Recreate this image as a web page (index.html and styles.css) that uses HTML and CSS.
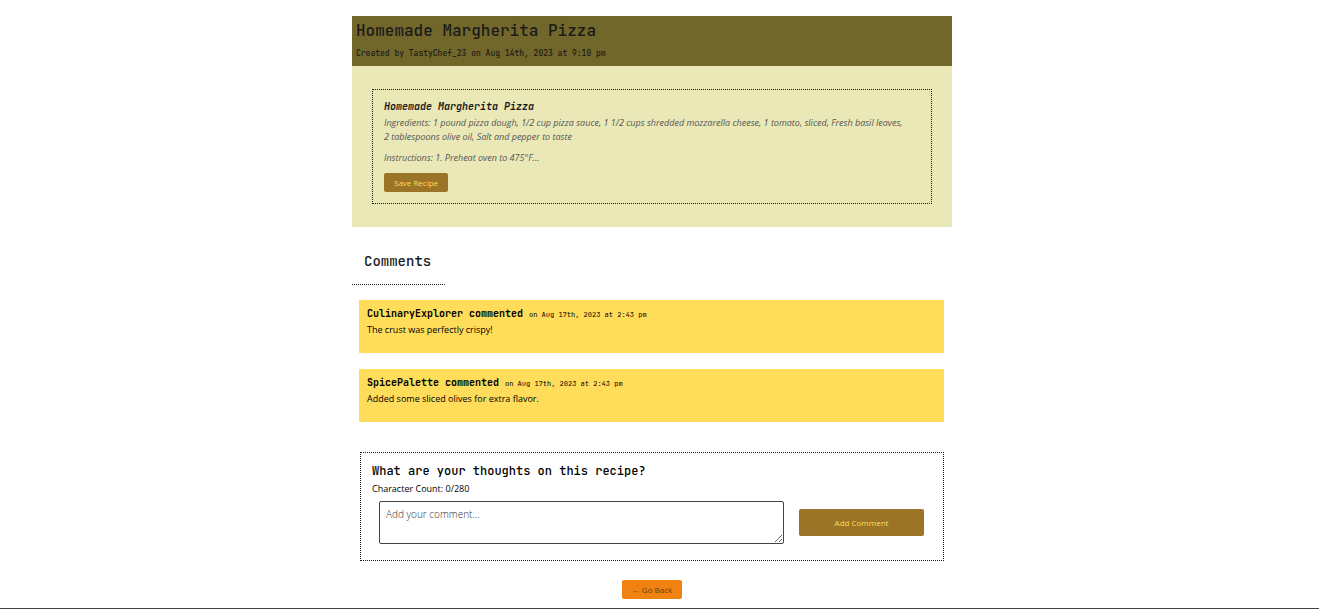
FILE: index.html
```html
<!DOCTYPE html>
<html lang="en">
<head>
<meta charset="utf-8">
<title>Homemade Margherita Pizza</title>
<link rel="stylesheet" href="styles.css">
</head>
<body>
<main class="page">
  <article class="recipe">
    <header class="recipe-header">
      <h1 class="recipe-title">Homemade Margherita Pizza</h1>
      <p class="recipe-meta">Created by TastyChef_23 on Aug 14th, 2023 at 9:10 pm</p>
    </header>
    <div class="recipe-body">
      <section class="recipe-card">
        <h2 class="recipe-name">Homemade Margherita Pizza</h2>
        <p class="recipe-text">Ingredients: 1 pound pizza dough, 1/2 cup pizza sauce, 1 1/2 cups shredded mozzarella cheese, 1 tomato, sliced, Fresh basil leaves, 2&nbsp;tablespoons olive oil, Salt and pepper to taste</p>
        <p class="recipe-text">Instructions: 1. Preheat oven to 475°F...</p>
        <button class="btn" type="button">Save Recipe</button>
      </section>
    </div>
  </article>
  <h2 class="comments-title">Comments</h2>
  <section class="comments">
    <article class="comment">
      <h3 class="comment-head">CulinaryExplorer commented <span class="comment-date">on Aug 17th, 2023 at 2:43 pm</span></h3>
      <p class="comment-text">The crust was perfectly crispy!</p>
    </article>
    <article class="comment">
      <h3 class="comment-head">SpicePalette commented <span class="comment-date">on Aug 17th, 2023 at 2:43 pm</span></h3>
      <p class="comment-text">Added some sliced olives for extra flavor.</p>
    </article>
  </section>
  <form class="comment-form">
    <label class="form-title" for="comment">What are your thoughts on this recipe?</label>
    <p class="char-count">Character Count: 0/280</p>
    <div class="form-row">
      <textarea class="comment-input" id="comment" maxlength="280" placeholder="Add your comment..."></textarea>
      <button class="btn btn-submit" type="button">Add Comment</button>
    </div>
  </form>
  <button class="btn btn-back" type="button">← Go Back</button>
</main>
<footer class="footer"></footer>
</body>
</html>
```
FILE: styles.css
```css
* { box-sizing: border-box; }

body {
  margin: 0;
  background: #fff;
  color: #1a1a1a;
  font: 400 9px/14px "Open Sans", sans-serif;
}

h1, h2, h3, p { margin: 0; }

.page {
  display: flex;
  flex-direction: column;
  padding: 16px 15px 9px 0;
  width: 100%;
  max-width: 615px;
  margin: 0 auto;
}

.recipe-header {
  padding: 4px 4px 6px;
  background: #72672a;
}

.recipe-title,
.recipe-meta,
.recipe-name,
.comments-title,
.comment-head,
.form-title {
  font-family: "JetBrains Mono", "DejaVu Sans Mono", monospace;
  font-weight: 500;
}

.recipe-title { font-size: 16px; line-height: 22px; margin-bottom: 4px; }
.recipe-meta { font-size: 8px; line-height: 14px; }

.recipe-body {
  padding: 23px 20px;
  background: #eae8b7;
}

.recipe-card {
  padding: 9px 11px 11px;
  border: 1px dotted #1a1a1a;
}

.recipe-name {
  margin-bottom: 1px;
  font-size: 10px;
  line-height: 16px;
  font-weight: 700;
  font-style: italic;
}

.recipe-text {
  margin-bottom: 7px;
  color: #555;
  font-style: italic;
}

.btn {
  height: 19px;
  padding: 0 10px;
  border: 0;
  border-radius: 2px;
  background: #9b7427;
  color: #ffdd57;
  font: 500 8px/18px "Open Sans", sans-serif;
  cursor: pointer;
}

.recipe-card .btn { display: block; margin-top: 8px; }

.comments-title {
  align-self: flex-start;
  margin: 22px 0 15px;
  padding: 0 14px 11px 12px;
  border-bottom: 1px dotted #1a1a1a;
  font-size: 14px;
  line-height: 24px;
}

.comments {
  display: flex;
  flex-direction: column;
  gap: 16px;
  padding: 0 8px 0 7px;
}

.comment {
  padding: 6px 8px 16px;
  background: #ffdd5a;
  color: #000;
}

.comment-head { font-size: 10px; line-height: 16px; font-weight: 700; }
.comment-date { font-size: 7px; font-weight: 400; }

.comment-form {
  margin: 30px 8px 19px;
  padding: 9px 11px 16px;
  border: 1px dotted #1a1a1a;
  color: #000;
}

.form-title { display: block; font-size: 12px; line-height: 18px; }
.char-count { margin: 2px 0 5px; }

.form-row {
  display: flex;
  align-items: center;
  gap: 15px;
  padding: 0 8px 0 7px;
}

.comment-input {
  flex: 1;
  min-width: 0;
  height: 43px;
  padding: 5px 6px;
  border: 1px solid #444;
  border-radius: 2px;
  background: #fff;
  color: #000;
  font: 300 10px/14px "Open Sans", sans-serif;
}

.comment-input::placeholder { color: #333; }

.btn-submit { width: 125px; height: 27px; line-height: 27px; }

.btn-back {
  align-self: center;
  background: #ef8210;
  color: #5a4410;
}

.footer { border-top: 1px solid #444; }
```
